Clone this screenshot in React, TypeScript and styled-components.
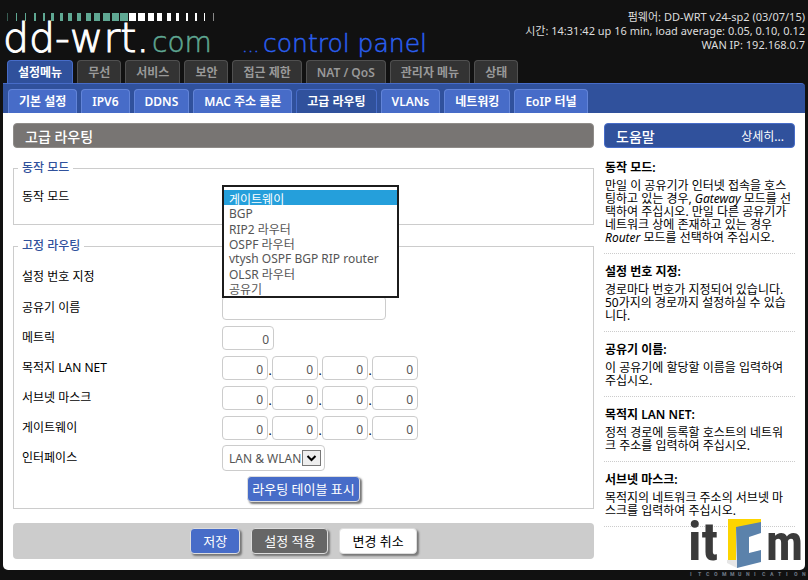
import React from "react";
import styled, { createGlobalStyle } from "styled-components";

const GlobalStyle = createGlobalStyle`
  * { box-sizing: border-box; }
  body {
    margin: 0;
    background: #111;
    color: #000;
    font: 12px/14px "Noto Sans", "Noto Sans CJK KR", sans-serif;
  }
  button, input, select { font: inherit; margin: 0; }
`;

const blue = "#30519c";
const lightBlue = "#476cc8";

const Page = styled.div`
  padding: 0 3px 10px;
`;

const Header = styled.header`
  display: flex;
  justify-content: space-between;
  height: 60px;
`;

const Brand = styled.svg`
  flex: none;
  width: 440px;
  height: 60px;
  overflow: visible;
  font-family: "DejaVu Sans", sans-serif;
  font-weight: 200;
`;

const Info = styled.div`
  padding-top: 10px;
  color: #ddd;
  font-size: 11px;
  text-align: right;
  line-height: 14px;
  white-space: nowrap;
`;

const TabRow = styled.nav<{ $sub?: boolean }>`
  display: flex;
  align-items: flex-end;
  gap: 4px;
  padding: ${(p) => (p.$sub ? "5px 5px 0" : "0 4px")};
  ${(p) =>
    p.$sub &&
    `background: ${blue}; border-top: 1px solid ${lightBlue}; border-radius: 0 4px 0 0;`}
`;

const Tab = styled.a<{ $sub?: boolean; $active?: boolean }>`
  height: ${(p) => (p.$sub ? "24px" : "23px")};
  padding: 0 10px;
  border: 1px solid ${(p) => (p.$active ? lightBlue : p.$sub ? "#6284d8" : "#505050")};
  border-bottom: 0;
  border-radius: 4px 4px 0 0;
  background: ${(p) => (p.$active ? blue : p.$sub ? lightBlue : "#333")};
  color: ${(p) => (p.$active || p.$sub ? "#fff" : "#999")};
  font-weight: 600;
  line-height: 24px;
  text-decoration: none;
  white-space: nowrap;
`;

const Body = styled.div`
  display: flex;
  align-items: flex-start;
  gap: 10px;
  padding: 10px 10px 11px;
  background: #fff;
  border-radius: 0 0 5px 5px;
`;

const Main = styled.main`
  flex: 1;
  min-width: 0;
`;

const Bar = styled.div<{ $help?: boolean }>`
  display: flex;
  justify-content: space-between;
  align-items: center;
  height: 25px;
  margin-bottom: 2px;
  padding: 2px 10px 0 11px;
  border: 1px solid ${(p) => (p.$help ? lightBlue : "#8f8c89")};
  border-radius: 4px;
  background: ${(p) => (p.$help ? blue : "#787573")};
  color: #fff;
`;

const Title = styled.h2`
  margin: 0;
  font-size: 14px;
  font-weight: 500;
`;

const More = styled.a`
  color: #fff;
  text-decoration: none;
`;

const Group = styled.fieldset<{ $gap: number; $end: number }>`
  min-width: 0;
  margin: ${(p) => p.$gap}px 0 0;
  padding: 7px 8px ${(p) => p.$end}px;
  border: 1px solid #ccc;
`;

const Legend = styled.legend`
  margin-left: -4px;
  padding: 0 4px;
  color: ${blue};
  font-weight: 500;
`;

const Row = styled.div<{ $tall?: boolean }>`
  display: flex;
  align-items: center;
  position: relative;
  height: ${(p) => (p.$tall ? "33px" : "30px")};
`;

const Label = styled.label`
  width: 200px;
  flex: none;
`;

const Octets = styled.div`
  display: flex;
  align-items: flex-end;
`;

const Dot = styled.span`
  width: 4px;
  text-align: center;
  line-height: 18px;
`;

const Field = styled.input<{ $width: number }>`
  width: ${(p) => p.$width}px;
  height: 24px;
  padding: 3px 4px 0;
  border: 1px solid #ccc;
  border-radius: 4px;
  background: #fff;
  color: #555;
  font-size: 12px;
  text-align: right;
`;

const Picker = styled.span`
  position: relative;
  display: inline-flex;
`;

const Select = styled.select`
  appearance: none;
  height: 26px;
  min-width: 60px;
  padding: 1px 22px 0 6px;
  border: 1px solid #ccc;
  border-radius: 4px;
  background: #fff;
  color: #555;
  font-size: 12px;
`;

const Arrow = styled.svg`
  position: absolute;
  right: 4px;
  top: 5px;
  width: 19px;
  height: 16px;
  border: 1px solid #777;
  background: #eee;
  pointer-events: none;
`;

const OpenList = styled.select`
  position: absolute;
  left: 200px;
  top: 3px;
  z-index: 2;
  width: 177px;
  height: 113px;
  padding: 3px 0 1px;
  border: 2px solid #1c1c1c;
  border-radius: 0;
  background: #fff;
  color: #555;
  font-size: 12px;
  outline: 0;
  overflow: hidden;
`;

const Choice = styled.option`
  height: 15px;
  min-height: 15px;
  padding: 0 5px;
  line-height: 15px;
  color: #555;
  &:checked {
    background: #259fdb linear-gradient(#259fdb, #259fdb);
    color: #fff;
    -webkit-text-fill-color: #fff;
  }
`;

const Button = styled.button<{ $bg: string; $ink?: string; $pad: number }>`
  height: 26px;
  padding: 0 ${(p) => p.$pad}px;
  border: 1px solid #ddd;
  border-radius: 4px;
  background: ${(p) => p.$bg};
  color: ${(p) => p.$ink || "#fff"};
  box-shadow: 2px 2px 2px #777;
  font-size: 13px;
`;

const Center = styled.div`
  display: flex;
  justify-content: center;
  padding-top: 3px;
`;

const Submit = styled.div`
  display: flex;
  justify-content: center;
  gap: 11px;
  margin-top: 14px;
  padding: 5px;
  border-radius: 4px;
  background: #ccc;
`;

const Help = styled.aside`
  position: relative;
  flex: none;
  width: 191px;
`;

const Topic = styled.section`
  padding: 11px 1px 9px;
  border-bottom: 1px dotted #ccc;
  line-height: 13px;
`;

const TopicTitle = styled.h3`
  margin: 0 0 5px;
  font-size: 12px;
  font-weight: 600;
`;

const Text = styled.p`
  margin: 0;
`;

const Watermark = styled.svg`
  position: absolute;
  left: 84px;
  top: 391px;
  width: 118px;
  height: 64px;
  overflow: visible;
  font-family: "Liberation Sans Narrow", "Roboto Condensed", "Liberation Sans", sans-serif;
  font-weight: 700;
  pointer-events: none;
`;

const mainTabs = ["설정메뉴", "무선", "서비스", "보안", "접근 제한", "NAT / QoS", "관리자 메뉴", "상태"];
const subTabs = ["기본 설정", "IPV6", "DDNS", "MAC 주소 클론", "고급 라우팅", "VLANs", "네트워킹", "EoIP 터널"];
const modes = ["게이트웨이", "BGP", "RIP2 라우터", "OSPF 라우터", "vtysh OSPF BGP RIP router", "OLSR 라우터", "공유기"];
const barWidths = [1, 1, 1, 2, 2, 3, 3, 4, 4, 5, 6, 7, 7, 8, 7, 7, 6, 5, 4, 3, 2, 2, 1, 1];

const topics: [string, React.ReactNode][] = [
  ["동작 모드:", <>만일 이 공유기가 인터넷 접속을 호스팅하고 있는 경우, <i>Gateway</i> 모드를 선택하여 주십시오. 만일 다른 공유기가 네트워크 상에 존재하고 있는 경우 <i>Router</i> 모드를 선택하여 주십시오.</>],
  ["설정 번호 지정:", "경로마다 번호가 지정되어 있습니다. 50가지의 경로까지 설정하실 수 있습니다."],
  ["공유기 이름:", "이 공유기에 할당할 이름을 입력하여 주십시오."],
  ["목적지 LAN NET:", "정적 경로에 등록할 호스트의 네트워크 주소를 입력하여 주십시오."],
  ["서브넷 마스크:", "목적지의 네트워크 주소의 서브넷 마스크를 입력하여 주십시오."],
];

function Address({ id, label }: { id: string; label: string }) {
  return (
    <Row>
      <Label htmlFor={`${id}-0`}>{label}</Label>
      <Octets>
        {[0, 1, 2, 3].map((n) => (
          <React.Fragment key={n}>
            {n > 0 && <Dot>.</Dot>}
            <Field id={`${id}-${n}`} aria-label={`${label} ${n + 1}`} $width={46} defaultValue="0" />
          </React.Fragment>
        ))}
      </Octets>
    </Row>
  );
}

export default function App() {
  return (
    <Page>
      <GlobalStyle />
      <Header>
        <Brand viewBox="0 0 440 60">
          {barWidths.map((w, i) => (
            <rect
              key={i}
              x={Math.round(4.7 + i * 8.95 - w / 2)}
              y="13"
              width={w}
              height="8"
              fill={i < 14 ? "#5fa893" : "#fff"}
              opacity={i === 0 || i === 23 ? 0.5 : 1}
            />
          ))}
          <text x="0" y="52" fontSize="41" fill="#fff" stroke="#fff" strokeWidth="1">dd-wrt.</text>
          <text x="149" y="52" fontSize="28" fill="#5fa893" stroke="#5fa893" strokeWidth="0.5">com</text>
          <text x="239" y="52" fontSize="18" fill="#2a5ff0" stroke="#2a5ff0" strokeWidth="0.5">...</text>
          <text x="260" y="52" fontSize="25" fill="#2a5ff0" stroke="#2a5ff0" strokeWidth="0.5">control panel</text>
        </Brand>
        <Info>
          <div>펌웨어: DD-WRT v24-sp2 (03/07/15)</div>
          <div>시간: 14:31:42 up 16 min, load average: 0.05, 0.10, 0.12</div>
          <div>WAN IP: 192.168.0.7</div>
        </Info>
      </Header>
      <TabRow>
        {mainTabs.map((t, i) => (
          <Tab key={t} href="#" $active={i === 0}>{t}</Tab>
        ))}
      </TabRow>
      <TabRow $sub>
        {subTabs.map((t, i) => (
          <Tab key={t} href="#" $sub $active={i === 4}>{t}</Tab>
        ))}
      </TabRow>
      <Body>
        <Main>
          <Bar><Title>고급 라우팅</Title></Bar>
          <Group $gap={13} $end={12}>
            <Legend>동작 모드</Legend>
            <Row>
              <Label htmlFor="mode">동작 모드</Label>
              <OpenList id="mode" size={7} defaultValue={modes[0]}>
                {modes.map((m) => (
                  <Choice key={m} value={m}>{m}</Choice>
                ))}
              </OpenList>
            </Row>
          </Group>
          <Group $gap={14} $end={6}>
            <Legend>고정 라우팅</Legend>
            <Row $tall>
              <Label htmlFor="route">설정 번호 지정</Label>
              <Select id="route" />
            </Row>
            <Row>
              <Label htmlFor="name">공유기 이름</Label>
              <Field id="name" $width={164} />
            </Row>
            <Row>
              <Label htmlFor="metric">메트릭</Label>
              <Field id="metric" $width={52} defaultValue="0" />
            </Row>
            <Address id="dest" label="목적지 LAN NET" />
            <Address id="mask" label="서브넷 마스크" />
            <Address id="gateway" label="게이트웨이" />
            <Row>
              <Label htmlFor="iface">인터페이스</Label>
              <Picker>
                <Select id="iface"><option>LAN &amp; WLAN</option></Select>
                <Arrow viewBox="0 0 16 14">
                  <path d="M4 5l4 4 4-4" fill="none" stroke="#000" strokeWidth="2" />
                </Arrow>
              </Picker>
            </Row>
            <Center>
              <Button type="button" $bg={lightBlue} $pad={4}>라우팅 테이블 표시</Button>
            </Center>
          </Group>
          <Submit>
            <Button type="button" $bg={lightBlue} $pad={12}>저장</Button>
            <Button type="button" $bg="#666" $pad={12}>설정 적용</Button>
            <Button type="button" $bg="#fff" $ink="#000" $pad={12}>변경 취소</Button>
          </Submit>
        </Main>
        <Help>
          <Bar $help>
            <Title>도움말</Title>
            <More href="#">상세히...</More>
          </Bar>
          {topics.map(([title, text]) => (
            <Topic key={title}>
              <TopicTitle>{title}</TopicTitle>
              <Text>{text}</Text>
            </Topic>
          ))}
          <Watermark viewBox="0 0 118 64">
            <text x="0" y="46" fontSize="54" fill="#3b3b3b">it</text>
            <path d="M40 5H73V9L48 14V46H40z" fill="#fcd400" />
            <path d="M39 46H48L49 54L39 49z" fill="#e6e6e6" />
            <path d="M48 13L73 8V19L61 23V39L73 36V48L49 54z" fill="#5b82ab" />
            <text x="78" y="46" fontSize="50" fill="#3b3b3b">m</text>
            {"ITCOMMUNICATION".split("").map((c, i) => (
              <text key={i} x={2 + i * 8} y="62" fontSize="6" fill="#6b7480">{c}</text>
            ))}
          </Watermark>
        </Help>
      </Body>
    </Page>
  );
}
